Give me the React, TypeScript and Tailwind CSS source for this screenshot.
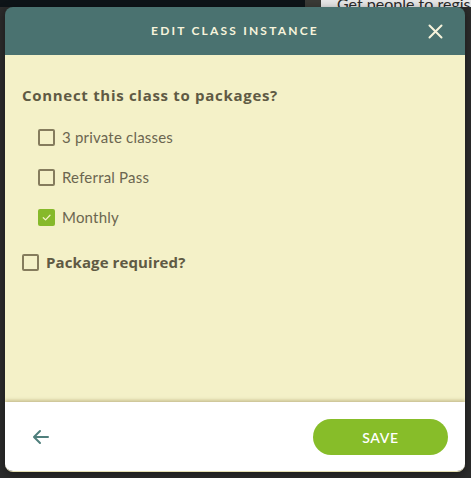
import React from 'react';

const Box: React.FC<{ checked?: boolean }> = ({ checked }) =>
  checked ? (
    <span className="flex h-[17px] w-[17px] shrink-0 items-center justify-center rounded-[2px] bg-[#86b92a]">
      <svg width="11" height="11" viewBox="0 0 12 12" fill="none">
        <path d="M2.5 6.2 5 8.6 9.8 3.6" stroke="#f4f1c8" strokeWidth="1.4" strokeLinecap="round" strokeLinejoin="round" />
      </svg>
    </span>
  ) : (
    <span className="h-[17px] w-[17px] shrink-0 rounded-[2px] border-2 border-[#857c5d]" />
  );

const App: React.FC = () => {
  const packages = [
    { name: '3 private classes', checked: false },
    { name: 'Referral Pass', checked: false },
    { name: 'Monthly', checked: true },
  ];

  return (
    <div className="relative h-[478px] w-[471px] overflow-hidden bg-[#2b2b2b] font-['Lato',sans-serif]">
      {/* page behind the modal */}
      <div className="flex h-[7px]">
        <div className="w-[305px] bg-[#0e1418]" />
        <div className="w-[16px] bg-[#3a3a36]" />
        <div className="flex-1 overflow-hidden bg-[#e6e6e6] pl-[16px] text-[16px] leading-[7px] whitespace-nowrap text-[#2a2a2a]">Get people to regis</div>
      </div>

      <div className="absolute left-[5px] top-[7px] flex h-[465px] w-[460px] flex-col overflow-hidden rounded-[8px] border-b border-[#e5dfb0] shadow-[0_2px_8px_rgba(0,0,0,0.4)]">
        <div className="relative flex h-[48px] items-center justify-center bg-[#4a7270]">
          <span className="text-[12px] font-bold tracking-[2.2px] text-[#f7f4dc]">EDIT CLASS INSTANCE</span>
          <svg className="absolute right-[22px] top-[17px]" width="15" height="15" viewBox="0 0 15 15">
            <path d="M1.5 1.5 13.5 13.5M13.5 1.5 1.5 13.5" stroke="#f7f4dc" strokeWidth="2" strokeLinecap="round" />
          </svg>
        </div>

        <div className="flex-1 bg-[#f4f1c8] px-[17px] pt-[30px]">
          <h3 className="font-['Open_Sans',sans-serif] text-[15px] font-bold leading-[20px] tracking-[0.7px] text-[#5f5a44]">Connect this class to packages?</h3>
          <div className="mt-[23px] flex flex-col gap-[22px] pl-[16px]">
            {packages.map(p => (
              <label key={p.name} className="flex h-[18px] items-center gap-[7px]">
                <Box checked={p.checked} />
                <span className="text-[15px] tracking-[0.2px] text-[#6b6650]">{p.name}</span>
              </label>
            ))}
          </div>
          <label className="mt-[27px] flex h-[18px] items-center gap-[7px]">
            <Box />
            <span className="font-['Open_Sans',sans-serif] text-[15px] font-bold tracking-[0.1px] text-[#5f5a44]">Package required?</span>
          </label>
        </div>

        <div className="flex h-[69px] items-center justify-between bg-white pl-[26px] pr-[17px] shadow-[0_-2px_3px_rgba(150,135,80,0.45)]">
          <svg width="20" height="20" viewBox="0 0 20 20" fill="none">
            <path d="M17 10H3.5M9 4 3 10l6 6" stroke="#4f7f7c" strokeWidth="2" strokeLinecap="round" strokeLinejoin="round" />
          </svg>
          <button className="mt-[1px] h-[36px] w-[135px] rounded-full bg-[#87bd29] text-[14px] font-semibold tracking-[0.6px] text-white">SAVE</button>
        </div>
      </div>
    </div>
  );
};

export default App;
